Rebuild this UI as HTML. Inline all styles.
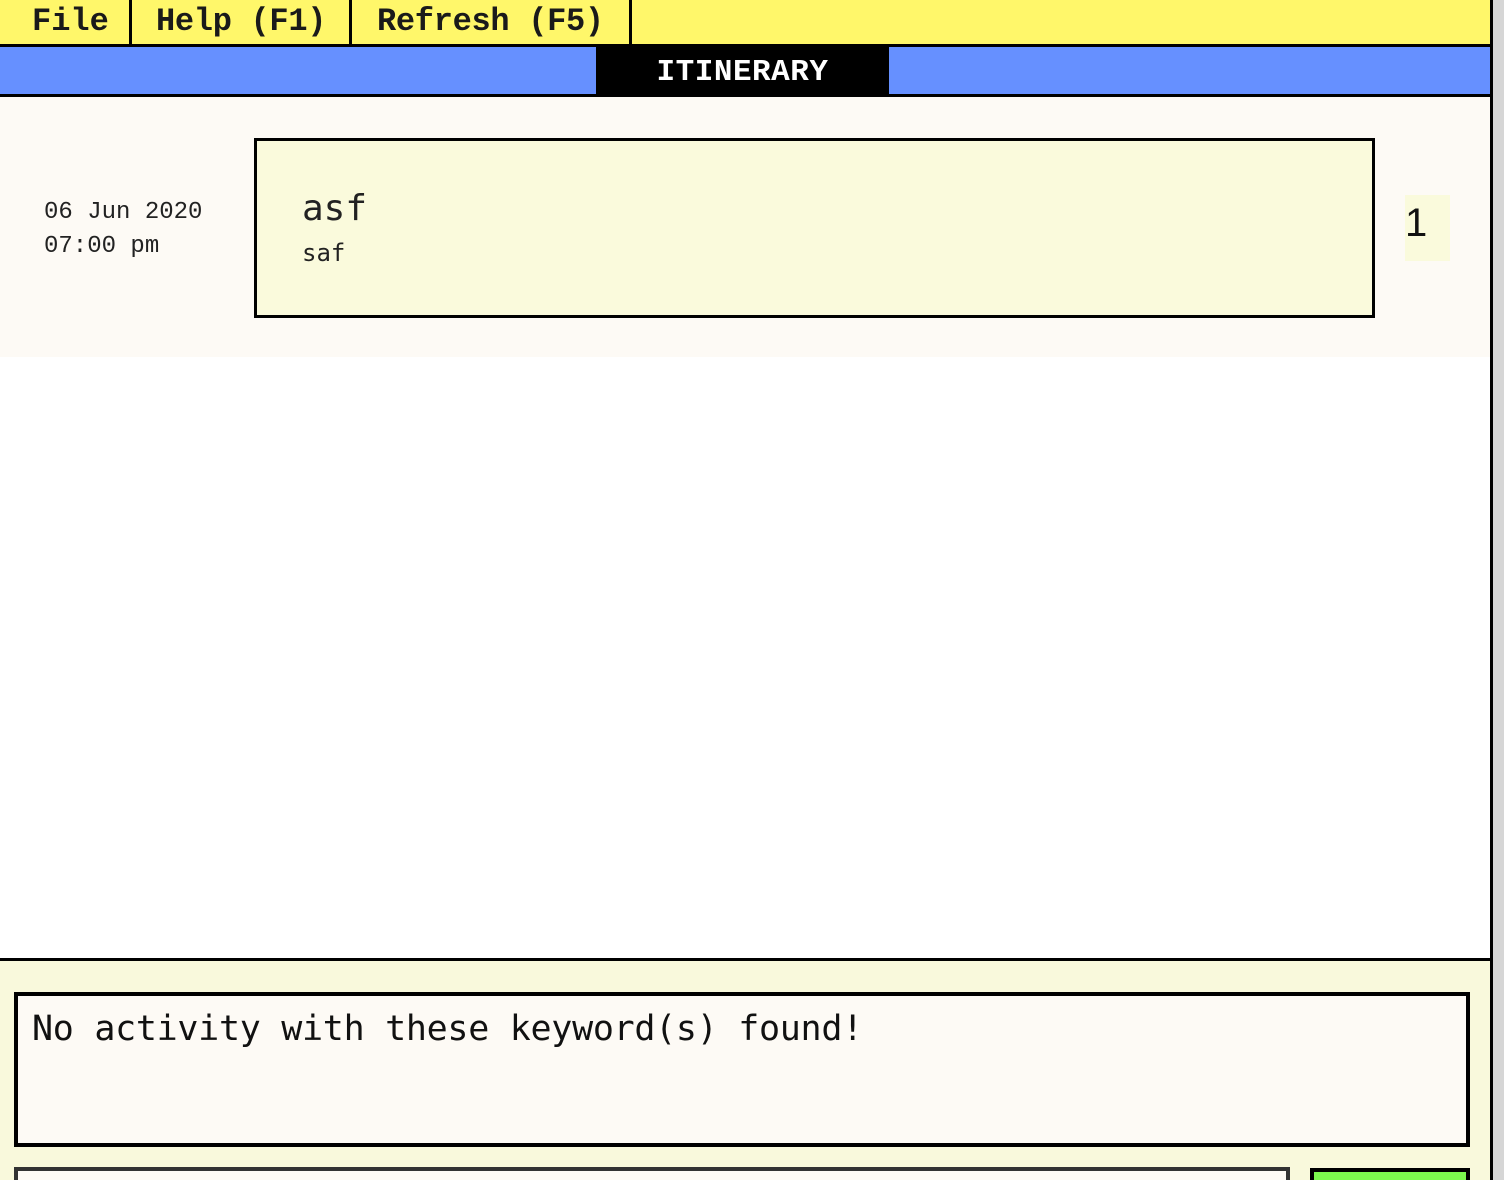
<!DOCTYPE html>
<html style="overflow:hidden;height:1180px"><head><style>
*{margin:0;padding:0;box-sizing:border-box}
body{width:1504px;height:1180px;overflow:hidden;background:#fff;font-family:"Liberation Mono",monospace;position:relative}
.a{position:absolute}
</style></head><body>
<div class="a" style="left:0;top:0;width:1490px;height:47px;background:#fff76a;border-bottom:3px solid #000"></div>
<div class="a" style="left:129px;top:0;width:3px;height:46px;background:#000"></div>
<div class="a" style="left:349px;top:0;width:3px;height:46px;background:#000"></div>
<div class="a" style="left:629px;top:0;width:3px;height:46px;background:#000"></div>
<div class="a" style="left:32px;top:3px;font-size:32px;font-weight:bold;color:#1a1a1a">File</div>
<div class="a" style="left:156px;top:3px;font-size:32px;font-weight:bold;color:#1a1a1a;letter-spacing:-0.3px">Help (F1)</div>
<div class="a" style="left:377px;top:3px;font-size:32px;font-weight:bold;color:#1a1a1a;letter-spacing:-0.3px">Refresh (F5)</div>
<div class="a" style="left:0;top:47px;width:1490px;height:50px;background:#6690ff;border-bottom:3px solid #000"></div>
<div class="a" style="left:596px;top:46px;width:293px;height:48px;background:#000;color:#fff;font-size:31px;font-weight:bold;text-align:center;line-height:54px;letter-spacing:0.5px">ITINERARY</div>
<div class="a" style="left:0;top:97px;width:1490px;height:260px;background:#fdfaf5"></div>
<div class="a" style="left:44px;top:196px;font-size:24px;line-height:34px;color:#222">06 Jun 2020<br>07:00 pm</div>
<div class="a" style="left:254px;top:138px;width:1121px;height:180px;background:#fafadc;border:3px solid #000"></div>
<div class="a" style="left:302px;top:188px;font-family:'DejaVu Sans Mono',monospace;font-size:36px;color:#222">asf</div>
<div class="a" style="left:302px;top:239px;font-family:'DejaVu Sans Mono',monospace;font-size:24px;color:#222">saf</div>
<div class="a" style="left:1405px;top:195px;width:45px;height:66px;background:#fafadc;font-family:'Liberation Sans',sans-serif;font-size:40px;line-height:56px;color:#111">1</div>
<div class="a" style="left:0;top:958px;width:1490px;height:222px;background:#f9f9dc;border-top:3px solid #000"></div>
<div class="a" style="left:14px;top:992px;width:1456px;height:155px;background:#fdfaf5;border:4px solid #000"></div>
<div class="a" style="left:32px;top:1009px;font-family:'DejaVu Sans Mono',monospace;font-size:35px;color:#111;letter-spacing:-0.3px">No activity with these keyword(s) found!</div>
<div class="a" style="left:14px;top:1167px;width:1276px;height:13px;background:#fdfaf5;border:4px solid #333;border-bottom:none"></div>
<div class="a" style="left:1310px;top:1168px;width:160px;height:12px;background:#7cf94e;border:4px solid #000;border-bottom:none"></div>
<div class="a" style="left:1490px;top:0;width:3px;height:1180px;background:#000"></div>
<div class="a" style="left:1493px;top:0;width:11px;height:1180px;background:#d6d6d6"></div>
</body></html>
